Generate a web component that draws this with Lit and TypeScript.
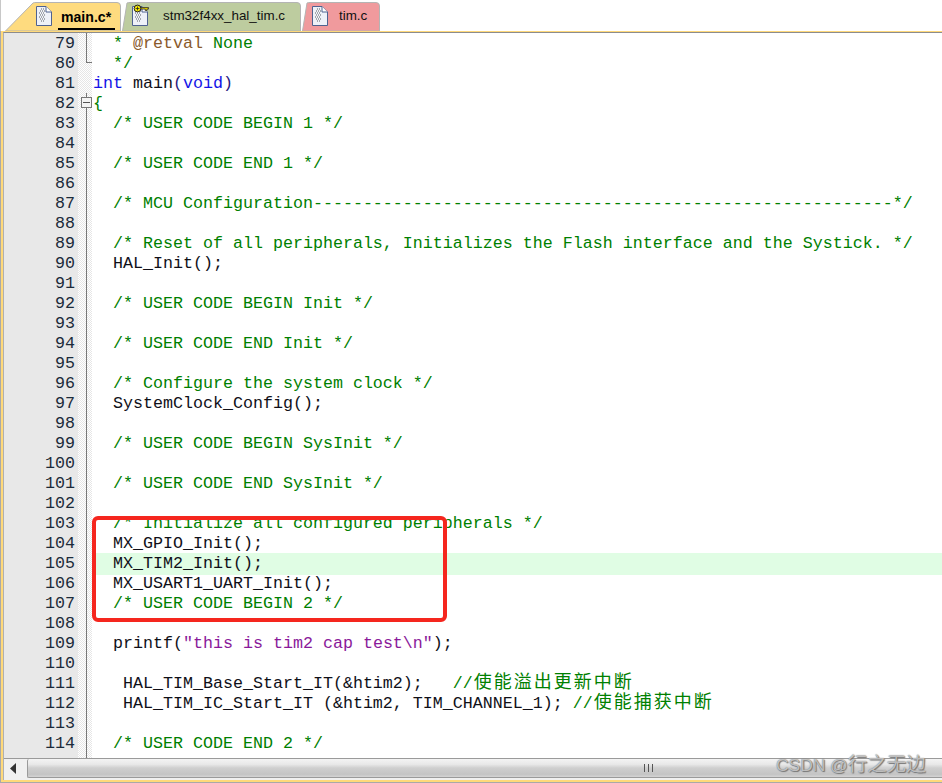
import { LitElement, html, css, svg } from "lit";
import { customElement } from "lit/decorators.js";

type Seg = [string, string];
const c = (t: string): Seg[] => [["c", t]];
const p = (t: string): Seg[] => [["p", t]];

const LINES: Seg[][] = [
  [["c", "  * "], ["d", "@retval"], ["c", " None"]],
  c("  */"),
  [["k", "int"], ["p", " main"], ["o", "("], ["k", "void"], ["o", ")"]],
  c("{"),
  c("  /* USER CODE BEGIN 1 */"),
  [],
  c("  /* USER CODE END 1 */"),
  [],
  c("  /* MCU Configuration----------------------------------------------------------*/"),
  [],
  c("  /* Reset of all peripherals, Initializes the Flash interface and the Systick. */"),
  p("  HAL_Init();"),
  [],
  c("  /* USER CODE BEGIN Init */"),
  [],
  c("  /* USER CODE END Init */"),
  [],
  c("  /* Configure the system clock */"),
  p("  SystemClock_Config();"),
  [],
  c("  /* USER CODE BEGIN SysInit */"),
  [],
  c("  /* USER CODE END SysInit */"),
  [],
  c("  /* Initialize all configured peripherals */"),
  p("  MX_GPIO_Init();"),
  p("  MX_TIM2_Init();"),
  p("  MX_USART1_UART_Init();"),
  c("  /* USER CODE BEGIN 2 */"),
  [],
  [["p", "  printf("], ["s", "\"this is tim2 cap test\\n\""], ["p", ");"]],
  [],
  [["p", "   HAL_TIM_Base_Start_IT(&htim2);   "], ["c", "//"], ["z", "使能溢出更新中断"]],
  [["p", "   HAL_TIM_IC_Start_IT (&htim2, TIM_CHANNEL_1); "], ["c", "//"], ["z", "使能捕获中断"]],
  [],
  c("  /* USER CODE END 2 */"),
  [],
];

const fileIcon = (key = false) => svg`
  <svg class="file" width="16" height="20" viewBox="0 0 16 20">
    <path d="M.5 .5H10L15.5 6V19.5H.5Z" fill="#eef1f8" stroke="#4f6290"/>
    <path d="M10 .5V6H15.5" fill="#fff" stroke="#4f6290"/>
    <path d="M5 3h3M4 5h5M3 7h6M4 9h5M3 11h6M4 13h5M5 15h3" stroke="#a4a8ae" stroke-width="2" stroke-dasharray="1 1"/>
    ${key ? svg`
      <circle cx="5.5" cy="2.5" r="3.4" fill="#f5e800" stroke="#222"/>
      <path d="M3.6 2.5h3.8M5.5 .6v3.8" stroke="#222" stroke-width=".8"/>
      <path d="M9 1.5h7.5v1.6h-1.5v1.4h-1.8v-1.4h-4.2z" fill="#d9c800" stroke="#222" stroke-width=".7"/>` : null}
  </svg>`;

@customElement("app-root")
export class AppRoot extends LitElement {
  static styles = css`
    :host { display: block; width: 942px; height: 783px; background: #fff; position: relative; overflow: hidden; font-family: "Liberation Mono", monospace; }
    .tabs { display: flex; height: 31px; background: #fff; padding-left: 4px; border-left: 1px solid #c8c8c8; box-sizing: border-box; }
    .tab { position: relative; display: flex; align-items: center; height: 31px; font: 13.4px/1 "Liberation Sans", sans-serif; color: #111; flex: none; box-sizing: border-box; padding-top: 1px; }
    .tab .shape { position: absolute; inset: 0; }
    .tab .file { position: relative; overflow: visible; }
    .tab .label { position: relative; }
    .main { width: 117px; }
    .main .file { margin-left: 31px; }
    .main .label { margin-left: 6px; padding: 4px 4px 3px 3px; font-weight: 700; font-size: 14.1px; color: #000; border-bottom: 2px solid #000; margin-top: 4px; }
    .stm { width: 180px; }
    .stm .file { margin-left: 10px; }
    .stm .label { margin-left: 15px; }
    .tim { width: 79px; }
    .tim .file { margin-left: 10px; }
    .tim .label { margin-left: 11px; }
    .frame { height: 752px; border: solid #a9a9a9; border-width: 0 0 1px 1px; box-sizing: border-box; background: #ffd97a; padding: 1px 0 2px 3px; display: flex; flex-direction: column; }
    .view { display: flex; flex-direction: column; height: 748px; background: #fff; border-top: 1px solid #8c8c8c; border-left: 1px solid #b0b0b0; margin-left: -1px; box-sizing: border-box; overflow: hidden; }
    .code {
      flex: 1; min-height: 0; overflow: hidden;
      background:
        linear-gradient(to right, #e8e8e8 74px, transparent 74px, transparent 88px, #fff 88px),
        repeating-conic-gradient(#e6e6e6 0 25%, #fff 0 50%) 0 0 / 2px 2px;
    }
    .row { display: grid; grid-template-columns: 70px 17px 1fr; height: 20px; font-size: 16.67px; line-height: 22px; white-space: pre; margin-left: 1px; }
    .num { text-align: right; color: #1b2b3a; }
    .fold { position: relative; margin-left: 11px; border-left: 1px solid #777; }
    .fold.end { border-left: 0; }
    .fold.end::before { content: ""; position: absolute; left: 0; top: 0; width: 5px; height: 9px; border: solid #777; border-width: 0 0 1px 1px; }
    .fold.box::before { content: ""; position: absolute; left: -6px; top: 4px; width: 11px; height: 11px; border: 1px solid #777; background: #f4f4f4; box-sizing: border-box; }
    .fold.box::after { content: ""; position: absolute; left: -4px; top: 9px; width: 7px; height: 1px; background: #555; }
    .txt { margin-left: 1px; }
    .row.hl .txt { background: #e0fde4; margin-left: 2px; text-indent: -1px; }
    .c { color: #008000; }
    .d { color: #8a5a2b; }
    .k { color: #1414e6; }
    .o { color: #2a1a80; }
    .p { color: #101018; }
    .s { color: #8a1a9a; }
    .z { color: #008000; font-family: "Noto Sans CJK SC", sans-serif; letter-spacing: 2px; font-size: 18px; line-height: 0; padding-left: 1px; }
    .bar { height: 22px; flex: none; display: flex; align-items: stretch; background: #f0f0f0; border-top: 1px solid #9a9a9a; padding-bottom: 2px; box-sizing: border-box; }
    .arrow { width: 23px; display: flex; align-items: center; justify-content: center; padding-right: 5px; box-sizing: border-box; }
    .thumb { flex: 1; border-left: 1px solid #9a9a9a; border-bottom: 1px solid #9a9a9a; border-radius: 2px 0 0 2px; background: linear-gradient(#f4f4f4 0, #e8e8e8 30%, #cfcfcf 50%, #c4c4c4 85%, #d4d4d4 100%); display: flex; align-items: center; padding-left: 616px; }
    .grip { display: flex; gap: 3px; }
    .grip i { width: 1px; height: 8px; background: #555; }
    .redbox { position: absolute; left: 92px; top: 516px; width: 355px; height: 106px; box-sizing: border-box; border: 4px solid #f5261e; border-radius: 6px; }
    .mark { position: absolute; left: 776px; top: 751px; font: 17.4px/24px "Liberation Sans", sans-serif; color: rgba(255,255,255,.6); text-shadow: 0 0 1px #555, 1px 1px 1px #777; white-space: nowrap; }
    .mark b { font: 19.5px/24px "Noto Sans CJK SC", sans-serif; }
  `;

  private tabShape(w: number, fill: string, slant: number) {
    return svg`<svg class="shape" width=${w} height="31" viewBox="0 0 ${w} 31">
      <path d="M.5 31 L${slant} 3 Q${slant + 1} 2.5 ${slant + 3} 2.5 H${w - 5} Q${w - 1.5} 2.5 ${w - 1.5} 6 V31Z" fill=${fill} stroke="#b4b4b4"/>
    </svg>`;
  }

  render() {
    return html`
      <div class="tabs">
        <div class="tab main">${this.tabShape(117, "#fedb7f", 28)}${fileIcon()}<span class="label">main.c*</span></div>
        <div class="tab stm">${this.tabShape(180, "#bdcc9f", 5)}${fileIcon(true)}<span class="label">stm32f4xx_hal_tim.c</span></div>
        <div class="tab tim">${this.tabShape(79, "#f09a9d", 5)}${fileIcon()}<span class="label">tim.c</span></div>
      </div>
      <div class="frame">
        <div class="view">
          <div class="code">
            ${LINES.map((segs, i) => {
              const n = 79 + i;
              const fold = n === 80 ? "end" : n === 81 ? "none" : n === 82 ? "box" : "";
              return html`<div class="row ${n === 105 ? "hl" : ""}">
                <span class="num">${n === 115 ? "" : n}</span>
                ${fold === "none" ? html`<span></span>` : html`<span class="fold ${fold}"></span>`}
                <span class="txt">${segs.map(([k, t]) => html`<span class=${k}>${t}</span>`)}</span>
              </div>`;
            })}
          </div>
          <div class="bar">
            <div class="arrow"><svg width="7" height="11" viewBox="0 0 7 11"><path d="M6 0V11L0 5.5Z" fill="#333"/></svg></div>
            <div class="thumb"><div class="grip"><i></i><i></i><i></i></div></div>
          </div>
        </div>
      </div>
      <div class="redbox"></div>
      <div class="mark">CSDN @<b>行之无边</b></div>
    `;
  }
}
